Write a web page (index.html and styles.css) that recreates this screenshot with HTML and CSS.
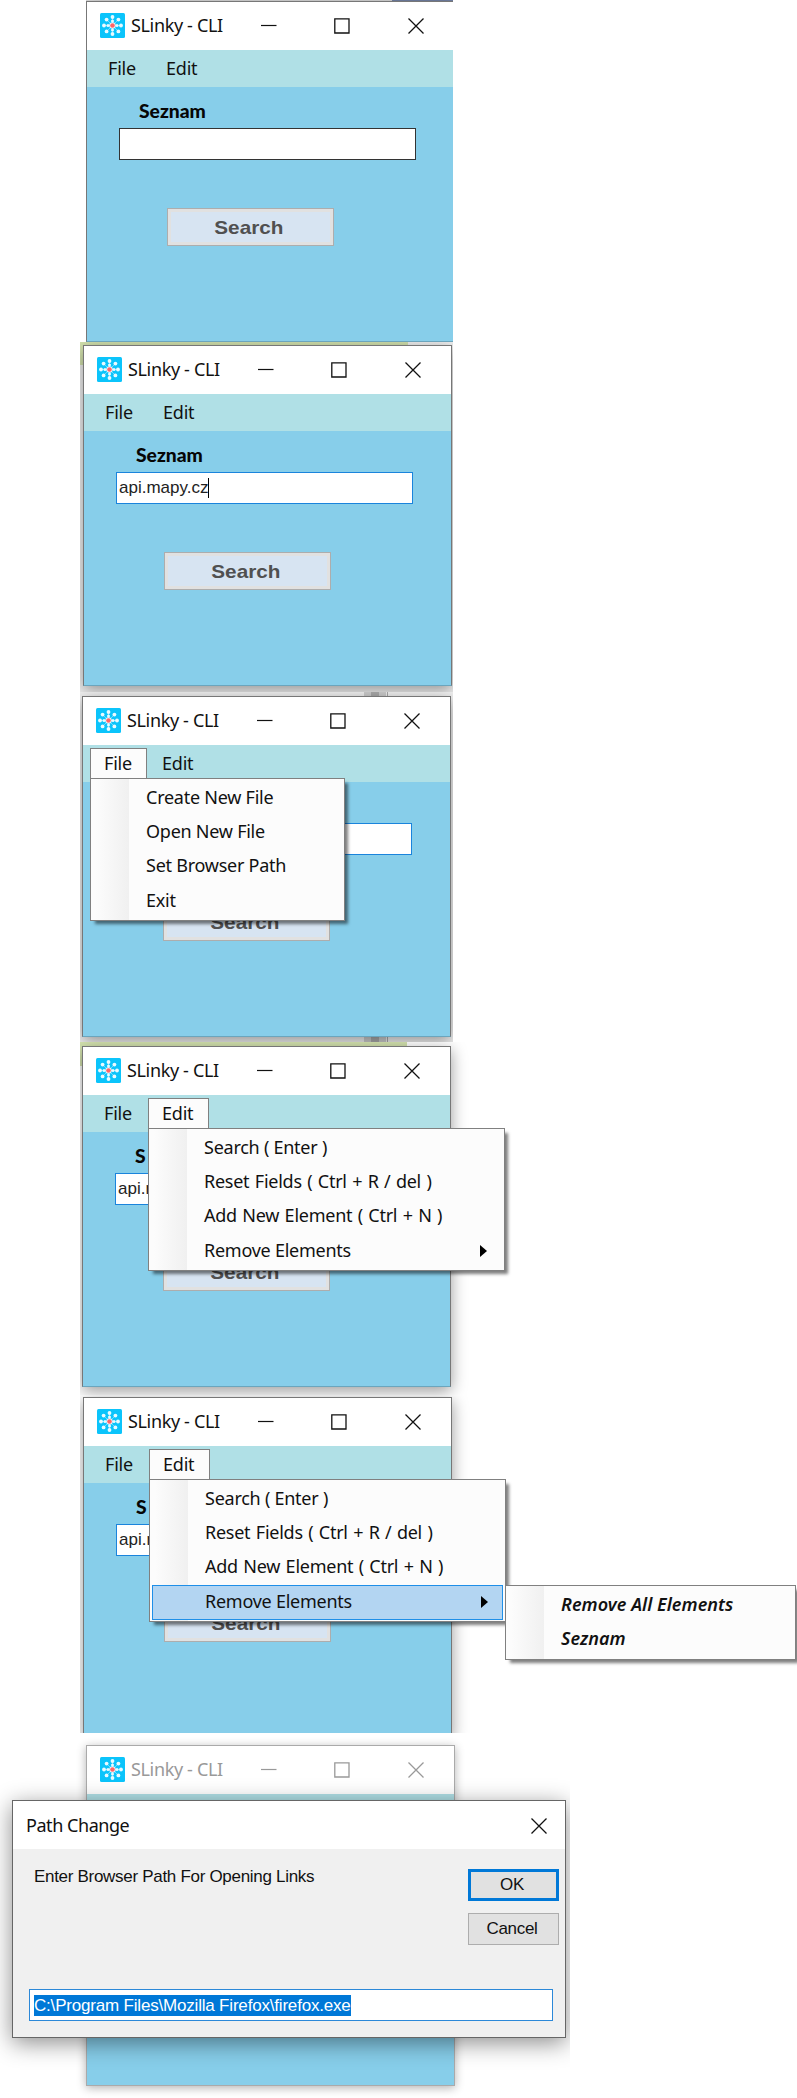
FILE: index.html
```html
<!DOCTYPE html>
<html lang="en">
<head>
<meta charset="utf-8">
<title>SLinky - CLI</title>
<link rel="stylesheet" href="styles.css">
</head>
<body>
<svg class="defs" width="0" height="0">
  <symbol id="logo" viewBox="0 0 25 25">
    <rect width="25" height="25" rx="1.5" fill="#0bc4fb"/>
    <g stroke="#6fdcff" stroke-width="1">
      <path d="M12.5 3v19M3 12.5h19M5.8 5.8l13.4 13.4M19.2 5.8L5.8 19.2"/>
    </g>
    <g fill="#eafaff">
      <circle cx="12.5" cy="4" r="1.9"/><circle cx="12.5" cy="21" r="1.9"/>
      <circle cx="4" cy="12.5" r="1.9"/><circle cx="21" cy="12.5" r="1.9"/>
      <circle cx="6.6" cy="6.6" r="1.9"/><circle cx="18.4" cy="6.6" r="1.9"/>
      <circle cx="6.6" cy="18.4" r="1.9"/><circle cx="18.4" cy="18.4" r="1.9"/>
      <circle cx="12.5" cy="8" r="1.5"/><circle cx="12.5" cy="17" r="1.5"/>
      <circle cx="8" cy="12.5" r="1.5"/><circle cx="17" cy="12.5" r="1.5"/>
      <circle cx="12.5" cy="12.5" r="3.2"/>
    </g>
    <circle cx="12.5" cy="12.5" r="2.3" fill="#ff6468"/>
  </symbol>
  <symbol id="min" viewBox="0 0 16 16"><path d="M0 7.5h15.5" stroke="currentColor" stroke-width="1.2"/></symbol>
  <symbol id="max" viewBox="0 0 16 16"><path d="M.8.8h14.2v14.2H.8z" fill="none" stroke="currentColor" stroke-width="1.3"/></symbol>
  <symbol id="close" viewBox="0 0 16 16"><path d="M.5.5l15 15M15.5.5l-15 15" stroke="currentColor" stroke-width="1.3"/></symbol>
</svg>

<main class="shots">
  <section class="shot shot-empty">
    <div class="win">
      <header class="titlebar"><svg class="logo"><use href="#logo"/></svg><span class="title">SLinky - CLI</span><svg class="ctl ctl-min"><use href="#min"/></svg><svg class="ctl ctl-max"><use href="#max"/></svg><svg class="ctl"><use href="#close"/></svg></header>
      <nav class="menubar"><span class="menu">File</span><span class="menu">Edit</span></nav>
      <div class="body">
        <div class="label"><span>Seznam</span></div>
        <div class="field"></div>
        <div class="search"><span>Search</span></div>
      </div>
    </div>
  </section>

  <section class="shot shot-typed">
    <div class="win">
      <header class="titlebar"><svg class="logo"><use href="#logo"/></svg><span class="title">SLinky - CLI</span><svg class="ctl ctl-min"><use href="#min"/></svg><svg class="ctl ctl-max"><use href="#max"/></svg><svg class="ctl"><use href="#close"/></svg></header>
      <nav class="menubar"><span class="menu">File</span><span class="menu">Edit</span></nav>
      <div class="body">
        <div class="label"><span>Seznam</span></div>
        <div class="field focus"><span>api.mapy.cz</span><i class="caret"></i></div>
        <div class="search"><span>Search</span></div>
      </div>
    </div>
  </section>

  <section class="shot shot-file">
    <div class="win">
      <header class="titlebar"><svg class="logo"><use href="#logo"/></svg><span class="title">SLinky - CLI</span><svg class="ctl ctl-min"><use href="#min"/></svg><svg class="ctl ctl-max"><use href="#max"/></svg><svg class="ctl"><use href="#close"/></svg></header>
      <nav class="menubar"><span class="menu open">File</span><span class="menu">Edit</span></nav>
      <div class="body">
        <div class="label"></div>
        <div class="field focus"></div>
        <div class="search"><span>Search</span></div>
      </div>
      <ul class="drop drop-file">
        <li>Create New File</li><li>Open New File</li><li>Set Browser Path</li><li>Exit</li>
      </ul>
    </div>
  </section>

  <section class="shot shot-edit">
    <div class="win">
      <header class="titlebar"><svg class="logo"><use href="#logo"/></svg><span class="title">SLinky - CLI</span><svg class="ctl ctl-min"><use href="#min"/></svg><svg class="ctl ctl-max"><use href="#max"/></svg><svg class="ctl"><use href="#close"/></svg></header>
      <nav class="menubar"><span class="menu">File</span><span class="menu open">Edit</span></nav>
      <div class="body">
        <div class="label"><span>S</span></div>
        <div class="field focus"><span>api.m</span></div>
        <div class="search"><span>Search</span></div>
      </div>
      <ul class="drop drop-edit">
        <li>Search ( Enter )</li><li class="keys">Reset Fields ( Ctrl + R / del )</li><li class="keys">Add New Element ( Ctrl + N )</li><li>Remove Elements<i class="arrow"></i></li>
      </ul>
    </div>
  </section>

  <section class="shot shot-sub">
    <div class="win">
      <header class="titlebar"><svg class="logo"><use href="#logo"/></svg><span class="title">SLinky - CLI</span><svg class="ctl ctl-min"><use href="#min"/></svg><svg class="ctl ctl-max"><use href="#max"/></svg><svg class="ctl"><use href="#close"/></svg></header>
      <nav class="menubar"><span class="menu">File</span><span class="menu open">Edit</span></nav>
      <div class="body">
        <div class="label"><span>S</span></div>
        <div class="field focus"><span>api.m</span></div>
        <div class="search"><span>Search</span></div>
      </div>
      <ul class="drop drop-edit">
        <li>Search ( Enter )</li><li class="keys">Reset Fields ( Ctrl + R / del )</li><li class="keys">Add New Element ( Ctrl + N )</li><li class="active">Remove Elements<i class="arrow"></i></li>
      </ul>
      <ul class="drop drop-sub">
        <li>Remove All Elements</li><li>Seznam</li>
      </ul>
    </div>
  </section>

  <section class="shot shot-dialog">
    <div class="win inactive">
      <header class="titlebar"><svg class="logo"><use href="#logo"/></svg><span class="title">SLinky - CLI</span><svg class="ctl ctl-min"><use href="#min"/></svg><svg class="ctl ctl-max"><use href="#max"/></svg><svg class="ctl"><use href="#close"/></svg></header>
      <nav class="menubar"></nav>
      <div class="body"></div>
    </div>
    <div class="dialog">
      <header class="dialog-title"><span>Path Change</span><svg class="ctl"><use href="#close"/></svg></header>
      <div class="dialog-main">
        <p class="prompt">Enter Browser Path For Opening Links</p>
        <div class="buttons"><div class="btn ok">OK</div><div class="btn">Cancel</div></div>
      </div>
      <div class="path"><span>C:\Program Files\Mozilla Firefox\firefox.exe</span></div>
    </div>
  </section>
</main>
</body>
</html>
```
FILE: styles.css
```css
* { box-sizing: border-box; }
body { margin: 0; background: #fff; font: 18px/24px "Noto Sans", "Open Sans", sans-serif; color: #111; }
.defs { position: absolute; }
.shots { display: flex; flex-direction: column; width: 797px; height: 2098px; overflow: hidden; }
.shot { position: relative; flex: none; overflow: hidden; }

.shot-empty { height: 342px; width: 367px; margin-left: 86px; padding-top: 1px; background: linear-gradient(90deg, #ddd 306px, #7584a8 306px); }
.shot-typed { height: 350px; width: 373px; margin-left: 80px; padding: 3px 0 0 3px;
  background: linear-gradient(#d3e2ae, #d3e2ae) 0 0 / 4px 23px no-repeat, linear-gradient(#d3e2ae, #d3e2ae) 0 0 / 328px 4px no-repeat, #f0f0f0; }
.shot-file { height: 350px; width: 373px; margin-left: 80px; padding: 4px 0 0 2px;
  background: linear-gradient(#aaa, #aaa) 291px 0 / 8px 100% no-repeat, linear-gradient(#aaa, #aaa) 307px 0 / 1px 100% no-repeat, linear-gradient(#ccc, #ccc) 284px 0 / 22px 100% no-repeat, #f0f0f0; }
.shot-edit { height: 353px; width: 440px; margin-left: 80px; padding: 4px 0 0 2px;
  background: linear-gradient(#d3e2ae, #d3e2ae) 0 0 / 3px 24px no-repeat, linear-gradient(#d3e2ae, #d3e2ae) 0 0 / 327px 4px no-repeat, #fff; }
.shot-sub { height: 338px; width: 717px; margin-left: 80px; padding: 2px 0 0 3px; }
.shot-dialog { height: 365px; width: 570px; padding: 12px 0 0 86px; }

.win { position: relative; width: 369px; height: 341px; border: 1px solid #777; border-bottom-color: #6ba5bd; background: #87ceea; box-shadow: 0 4px 15px rgba(0,0,0,.4); }
.win.inactive { border-color: #aaa; box-shadow: 0 2px 9px rgba(0,0,0,.3); }
.titlebar { display: flex; align-items: center; height: 48px; padding: 0 30px 2px 13px; background: #fff; }
.inactive .titlebar { color: #999; }
.logo { width: 25px; height: 25px; margin-right: 6px; }
.title { flex: 1; letter-spacing: -.35px; white-space: nowrap; }
.ctl { width: 16px; height: 16px; margin-top: 2px; }
.ctl-min { margin-right: 57px; }
.ctl-max { margin-right: 58px; }
.menubar { display: flex; height: 37px; padding: 3px 0 4px 7px; background: #b0e0e6; }
.menu { height: 30px; padding: 2px 13px 0; border: 1px solid transparent; letter-spacing: -.2px; width: 57px; }
.menu + .menu { width: 61px; margin-left: 1px; }
.menu.open { background: #fcfcfc; border-color: #808080; border-bottom: 0; position: relative; z-index: 3; }
.body { padding: 12px 0 0 32px; }
.label { height: 29px; padding-left: 20px; font: 900 18px/24px Lato, sans-serif; color: #060606; }
.label span { display: inline-block; transform: scaleX(1.07); transform-origin: left; }
.field { display: flex; align-items: center; width: 297px; height: 32px; border: 1px solid #333; background: #fff; padding-left: 2px; font: 17px/22px "Liberation Sans", Arial, sans-serif; letter-spacing: 0; color: #222; }
.field.focus { border-color: #1a84dc; }
.caret { width: 1px; height: 20px; background: #000; }
.search { display: flex; align-items: center; justify-content: center; width: 167px; height: 38px; margin: 48px 0 0 48px; padding: 2px 3px 0 0; border: 1px solid #adadad; background: #d7e4f2; box-shadow: inset 0 0 0 3px #e1e1e1; color: #505050; font: bold 18.5px/24px "Liberation Sans", Arial, sans-serif; }
.search span { transform: scaleX(1.12); }

.drop { position: absolute; z-index: 2; top: 81px; margin: 0; padding: 2px; list-style: none; border: 1px solid #808080; background: linear-gradient(90deg, #fcfcfc 5px, #f0f0f0 38px, #fcfcfc 38px); box-shadow: 4px 4px 3px -1px rgba(0,0,0,.5); letter-spacing: -.25px; }
.drop li { display: flex; align-items: center; justify-content: space-between; height: 34.4px; padding: 0 15px 3px 53px; white-space: nowrap; }
.drop .keys { word-spacing: 1px; }
.drop-file { left: 7px; width: 255px; height: 143px; }
.drop-edit { left: 65px; width: 357px; height: 143px; }
.drop-sub { left: 421px; top: 187px; width: 291px; height: 75px; font-style: italic; font-weight: 600; letter-spacing: .05px; }
.drop .active { background: #b3d5f2; box-shadow: inset 0 0 0 1px #1f8fe8; }
.arrow { margin-top: 3px; border-left: 7px solid #000; border-top: 6px solid transparent; border-bottom: 6px solid transparent; }

/* the dialog floats over the inactive window */
.dialog { position: absolute; z-index: 5; left: 12px; top: 67px; width: 554px; height: 238px; border: 1px solid #666; background: #f0f0f0; box-shadow: 0 5px 22px rgba(0,0,0,.45); }
.dialog-title { display: flex; align-items: center; justify-content: space-between; height: 48px; padding: 0 18px 0 13px; background: #fff; letter-spacing: -.45px; }
.dialog-title .ctl { margin-top: 1px; }
.dialog-main { display: flex; justify-content: space-between; padding: 20px 6px 0 21px; font: 17px/24px "Liberation Sans", Arial, sans-serif; }
.prompt { margin: -4px 0 0; letter-spacing: -.3px; }
.buttons { display: flex; flex-direction: column; gap: 12px; }
.btn { width: 91px; height: 32px; padding-right: 3px; border: 1px solid #adadad; background: #e1e1e1; text-align: center; line-height: 30px; letter-spacing: -.3px; }
.btn.ok { border: 3px solid #0078d7; line-height: 26px; }
.path { display: flex; align-items: center; width: 524px; height: 32px; margin: 44px 0 0 16px; padding-left: 4px; border: 1px solid #2b88d8; background: #fff; font: 17px/21px "Liberation Sans", Arial, sans-serif; letter-spacing: -.19px; }
.path span { background: #0078d7; color: #fff; white-space: nowrap; }
```
